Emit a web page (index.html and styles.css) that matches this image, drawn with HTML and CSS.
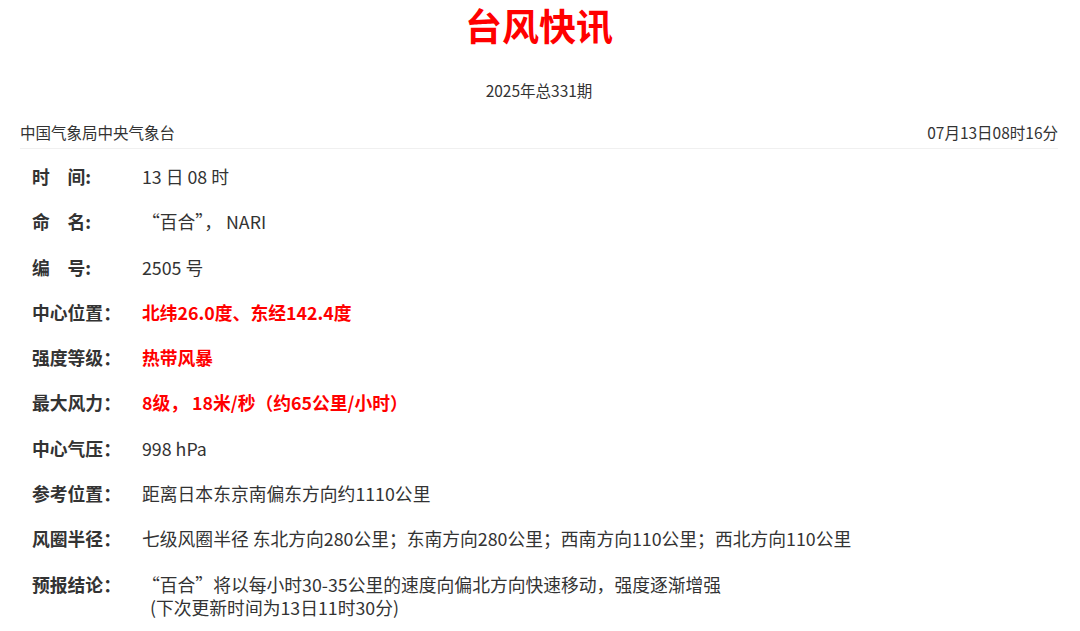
FILE: index.html
```html
<!DOCTYPE html>
<html lang="zh-CN">
<head>
<meta charset="utf-8">
<title>台风快讯</title>
<link rel="stylesheet" href="styles.css">
</head>
<body>
<div class="page">
  <h1 class="title">台风快讯</h1>
  <div class="issue">2025年总331期</div>
  <div class="meta">
    <span>中国气象局中央气象台</span>
    <span>07月13日08时16分</span>
  </div>
  <div class="rows">
    <div class="row"><div class="label">时　间:</div><div class="value">13 日 08 时</div></div>
    <div class="row"><div class="label">命　名:</div><div class="value">“百合”， NARI</div></div>
    <div class="row"><div class="label">编　号:</div><div class="value">2505 号</div></div>
    <div class="row"><div class="label">中心位置：</div><div class="value red">北纬26.0度、东经142.4度</div></div>
    <div class="row"><div class="label">强度等级：</div><div class="value red">热带风暴</div></div>
    <div class="row"><div class="label">最大风力：</div><div class="value red">8级， 18米/秒（约65公里/小时）</div></div>
    <div class="row"><div class="label">中心气压：</div><div class="value">998 hPa</div></div>
    <div class="row"><div class="label">参考位置：</div><div class="value">距离日本东京南偏东方向约1110公里</div></div>
    <div class="row"><div class="label">风圈半径：</div><div class="value">七级风圈半径 东北方向280公里；东南方向280公里；西南方向110公里；西北方向110公里</div></div>
    <div class="row"><div class="label">预报结论：</div><div class="value">“百合”将以每小时30-35公里的速度向偏北方向快速移动，强度逐渐增强<br>&nbsp;&nbsp;(下次更新时间为13日11时30分)</div></div>
  </div>
</div>
</body>
</html>
```
FILE: styles.css
```css
html, body {
  margin: 0;
  padding: 0;
  background: #ffffff;
}
body {
  font-family: "Noto Sans CJK SC", "Noto Sans", sans-serif;
  color: #333333;
}
.page {
  padding: 0 22px 0 20px;
}
.title {
  margin: 0;
  font-size: 37px;
  line-height: 50px;
  font-weight: 700;
  color: #ff0000;
  text-align: center;
}
.issue {
  margin-top: 30px;
  font-size: 15.5px;
  line-height: 20px;
  text-align: center;
  color: #333333;
}
.meta {
  margin-top: 22px;
  display: flex;
  justify-content: space-between;
  font-size: 15.5px;
  line-height: 20px;
  padding-bottom: 6px;
  border-bottom: 1px solid #f0f0f0;
  color: #333333;
}
.rows {
  display: flex;
  flex-direction: column;
  gap: 22.3px;
  padding: 16px 0 0 12px;
}
.row {
  display: flex;
  font-size: 17.8px;
  line-height: 23px;
}
.label {
  width: 110px;
  flex: none;
  font-weight: 700;
  color: #333333;
}
.value {
  color: #333333;
}
.value.red {
  color: #ff0000;
  font-weight: 700;
}
```
